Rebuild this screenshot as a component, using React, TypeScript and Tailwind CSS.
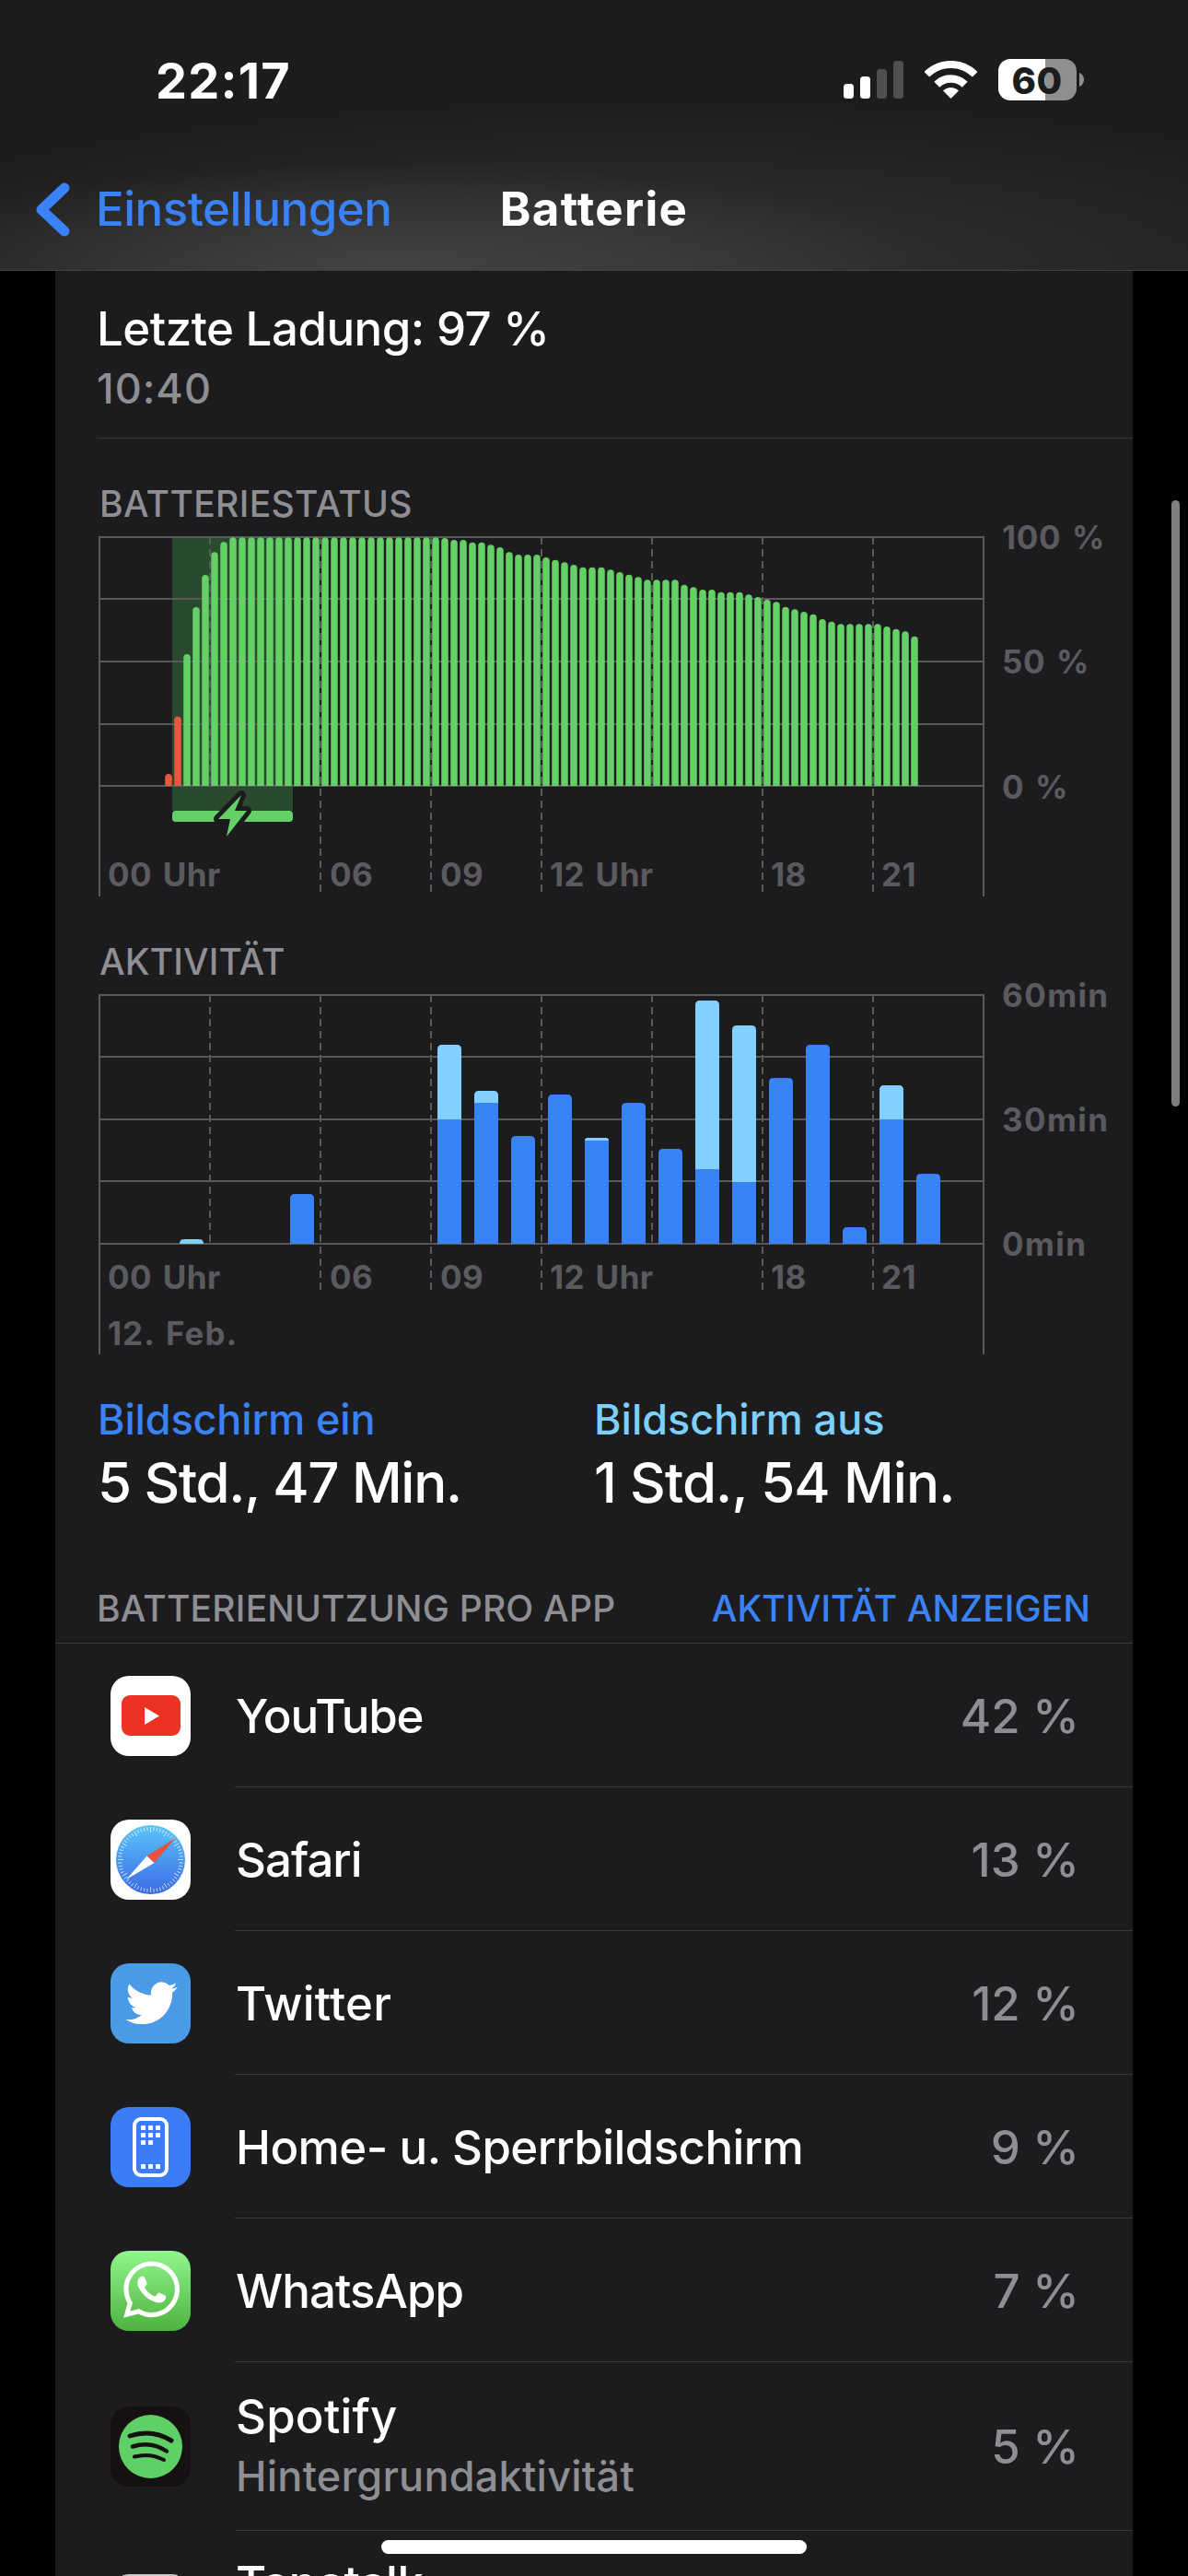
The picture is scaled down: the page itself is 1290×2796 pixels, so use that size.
import React from "react";

const tops = [
  ...Array(7).fill(null),
  960, 773, 570, 417, 312, 238, 205,
  ...Array(23).fill(190),
  192, 198, 198, 206, 206, 214, 222, 238, 246, 246, 246, 255, 263, 271, 279, 287, 287, 287, 295, 303, 311, 319, 328, 328, 328, 328,
  344, 352, 360, 360, 368, 368, 368, 376, 384, 392, 400, 416, 424, 432, 440, 456, 464, 472, 472, 472, 472, 472, 480, 488, 496, 512,
] as (number | null)[];

const activity: [number, number, number | null][] = [
  [2, 1035, 1050],
  [5, 888, null],
  [9, 402, 645],
  [10, 552, 591],
  [11, 699, null],
  [12, 564, null],
  [13, 705, 714],
  [14, 591, null],
  [15, 741, null],
  [16, 258, 807],
  [17, 339, 849],
  [18, 510, null],
  [19, 402, null],
  [20, 996, null],
  [21, 534, 645],
  [22, 822, null],
];

const GRID = "#59595b";
const LABEL = "#5b5b5f";

function topRound(x: number, y: number, w: number, bottom: number, r: number) {
  const rr = Math.min(r, bottom - y);
  return `M${x} ${bottom}V${y + rr}Q${x} ${y} ${x + rr} ${y}H${x + w - rr}Q${x + w} ${y} ${x + w} ${y + rr}V${bottom}Z`;
}

function Grid({ ys, top, axis, dashEnd, bottom }: { ys: number[]; top: number; axis: number; dashEnd: number; bottom: number }) {
  const dashes = [228, 348, 468, 588, 708, 828, 948];
  return (
    <g>
      {ys.map((y) => (
        <line key={y} x1={108} x2={1068} y1={y} y2={y} stroke={GRID} strokeWidth={2} />
      ))}
      <line x1={108} x2={108} y1={top - 1} y2={bottom} stroke={GRID} strokeWidth={2} />
      <line x1={1068} x2={1068} y1={top - 1} y2={bottom} stroke={GRID} strokeWidth={2} />
      {dashes.map((x) => (
        <line
          key={x}
          x1={x}
          x2={x}
          y1={top}
          y2={x === 228 || x === 708 ? axis : dashEnd}
          stroke={GRID}
          strokeWidth={2}
          strokeDasharray="8 5"
        />
      ))}
    </g>
  );
}

function XLabels({ y }: { y: number }) {
  const items: [number, string][] = [
    [117, "00 Uhr"],
    [358, "06"],
    [478, "09"],
    [597, "12 Uhr"],
    [837, "18"],
    [957, "21"],
  ];
  return (
    <g fill={LABEL} fontSize={35} fontWeight={700} letterSpacing={0.4} wordSpacing={3}>
      {items.map(([x, t]) => (
        <text key={t} x={x} y={y}>
          {t}
        </text>
      ))}
    </g>
  );
}

function BatteryChart() {
  return (
    <svg width={1170} height={405} viewBox="60 570 1170 405" className="block overflow-visible">
      <rect x={187} y={583} width={131} height={297} fill="#2a4a2e" />
      <Grid ys={[583, 650, 718, 786, 853]} top={583} axis={853} dashEnd={968} bottom={973} />
      {tops.map((t, i) => {
        if (t === null) return null;
        const x = 108 + 10 * i + 1.25;
        const y = 520 + t / 3;
        return <path key={i} d={topRound(x, y, 7.5, 853, 3.75)} fill={i < 9 ? "#e9573f" : "#64d066"} />;
      })}
      <rect x={187} y={880} width={131} height={12} rx={4} fill="#64d066" />
      <path
        d="M262 863L237 889H250L246 908L268 880H255Z"
        fill="#64d066"
        stroke="#1c1c1e"
        strokeWidth={10}
        strokeLinejoin="round"
        paintOrder="stroke"
      />
      <XLabels y={962} />
      <g fill={LABEL} fontSize={35} fontWeight={700} letterSpacing={0.6} wordSpacing={3}>
        <text x={1088} y={596}>100 %</text>
        <text x={1088} y={731}>50 %</text>
        <text x={1088} y={867}>0 %</text>
      </g>
    </svg>
  );
}

function ActivityChart() {
  return (
    <svg width={1170} height={405} viewBox="60 1067 1170 405" className="block overflow-visible">
      <Grid ys={[1080, 1147, 1215, 1282, 1350]} top={1080} axis={1350} dashEnd={1404} bottom={1470} />
      {activity.map(([i, t, s]) => {
        const x = 115 + 40 * i;
        const y = 1000 + t / 3;
        if (s === null) return <path key={i} d={topRound(x, y, 26, 1350, 5)} fill="#3a82f7" />;
        const split = 1000 + s / 3;
        return (
          <g key={i}>
            <path d={topRound(x, y, 26, split, 5)} fill="#82d0ff" />
            {split < 1350 && <rect x={x} y={split} width={26} height={1350 - split} fill="#3a82f7" />}
          </g>
        );
      })}
      <XLabels y={1399} />
      <g fill={LABEL} fontSize={35} fontWeight={700} wordSpacing={3}>
        <text x={117} y={1460} letterSpacing={1}>12. Feb.</text>
        <text x={1088} y={1093} letterSpacing={1.4}>60min</text>
        <text x={1088} y={1228} letterSpacing={1.4}>30min</text>
        <text x={1088} y={1363} letterSpacing={1.4}>0min</text>
      </g>
    </svg>
  );
}

function Icon({ bg, children }: { bg: string; children: React.ReactNode }) {
  return (
    <svg width={87} height={87} viewBox="0 0 87 87" className={`shrink-0 rounded-[20px] ${bg}`}>
      {children}
    </svg>
  );
}

function YouTubeIcon() {
  return (
    <Icon bg="bg-white">
      <rect x={12} y={21} width={64} height={44} rx={9} fill="#ec3323" />
      <path d="M37 34V53L53 43.5Z" fill="#fff" />
    </Icon>
  );
}

function SafariIcon() {
  const ticks = Array.from({ length: 60 }, (_, i) => i * 6);
  return (
    <Icon bg="bg-white">
      <defs>
        <linearGradient id="saf" x1="0" y1="0" x2="0" y2="1">
          <stop offset="0" stopColor="#5ac4f9" />
          <stop offset="1" stopColor="#3a6ae6" />
        </linearGradient>
      </defs>
      <circle cx={43.5} cy={43.5} r={37.5} fill="url(#saf)" />
      {ticks.map((a) => (
        <line
          key={a}
          x1={43.5}
          x2={43.5}
          y1={8}
          y2={a % 30 === 0 ? 14 : 12}
          stroke="#fff"
          strokeOpacity={0.85}
          strokeWidth={0.8}
          transform={`rotate(${a} 43.5 43.5)`}
        />
      ))}
      <path d="M70.5 20L39.5 39.5L47.5 47Z" fill="#e9503f" />
      <path d="M17 65L47.5 47L39.5 39.5Z" fill="#fff" />
    </Icon>
  );
}

function TwitterIcon() {
  return (
    <Icon bg="bg-[#4a9ae8]">
      <g transform="translate(16.5 15) scale(2.35)">
        <path
          fill="#fff"
          d="M23.953 4.57a10 10 0 01-2.825.775 4.958 4.958 0 002.163-2.723c-.951.555-2.005.959-3.127 1.184a4.92 4.92 0 00-8.384 4.482C7.69 8.095 4.067 6.13 1.64 3.162a4.822 4.822 0 00-.666 2.475c0 1.71.87 3.213 2.188 4.096a4.904 4.904 0 01-2.228-.616v.06a4.923 4.923 0 003.946 4.827 4.996 4.996 0 01-2.212.085 4.936 4.936 0 004.604 3.417 9.867 9.867 0 01-6.102 2.105c-.39 0-.779-.023-1.17-.067a13.995 13.995 0 007.557 2.209c9.053 0 13.998-7.496 13.998-13.985 0-.21 0-.42-.015-.63A9.935 9.935 0 0024 4.59z"
        />
      </g>
    </Icon>
  );
}

function HomeIcon() {
  const dots: [number, number][] = [
    [33, 20], [41, 20], [49, 20],
    [33, 28], [41, 28], [49, 28],
    [33, 36], [41, 36],
    [33, 62], [41, 62], [49, 62],
  ];
  return (
    <Icon bg="bg-[#3a7df6]">
      <rect x={26} y={13} width={35} height={61} rx={7} fill="none" stroke="#fff" strokeWidth={4} />
      {dots.map(([x, y]) => (
        <rect key={`${x}-${y}`} x={x} y={y} width={5} height={5} fill="#fff" rx={0.6} />
      ))}
    </Icon>
  );
}

function WhatsAppIcon() {
  return (
    <Icon bg="bg-gradient-to-b from-[#90f68c] to-[#4fb33f]">
      <g transform="translate(14 11.5) scale(2.55)">
        <path
          fill="#fff"
          d="M17.472 14.382c-.297-.149-1.758-.867-2.03-.967-.273-.099-.471-.148-.67.15-.197.297-.767.966-.94 1.164-.173.199-.347.223-.644.075-.297-.15-1.255-.463-2.39-1.475-.883-.788-1.48-1.761-1.653-2.059-.173-.297-.018-.458.13-.606.134-.133.298-.347.446-.52.149-.174.198-.298.298-.497.099-.198.05-.371-.025-.52-.075-.149-.669-1.612-.916-2.207-.242-.579-.487-.5-.669-.51-.173-.008-.371-.01-.57-.01-.198 0-.52.074-.792.372-.272.297-1.04 1.016-1.04 2.479 0 1.462 1.065 2.875 1.213 3.074.149.198 2.096 3.2 5.077 4.487.709.306 1.262.489 1.694.625.712.227 1.36.195 1.871.118.571-.085 1.758-.719 2.006-1.413.248-.694.248-1.289.173-1.413-.074-.124-.272-.198-.57-.347m-5.421 7.403h-.004a9.87 9.87 0 01-5.031-1.378l-.361-.214-3.741.982.998-3.648-.235-.374a9.86 9.86 0 01-1.51-5.26c.001-5.45 4.436-9.884 9.888-9.884 2.64 0 5.122 1.03 6.988 2.898a9.825 9.825 0 012.893 6.994c-.003 5.45-4.437 9.884-9.885 9.884m8.413-18.297A11.815 11.815 0 0012.05 0C5.495 0 .16 5.335.157 11.892c0 2.096.547 4.142 1.588 5.945L.057 24l6.305-1.654a11.882 11.882 0 005.683 1.448h.005c6.554 0 11.89-5.335 11.893-11.893a11.821 11.821 0 00-3.48-8.413z"
        />
      </g>
    </Icon>
  );
}

function SpotifyIcon() {
  return (
    <Icon bg="bg-[#141110]">
      <circle cx={43.5} cy={43.5} r={34.5} fill="#5fd068" />
      <g fill="none" stroke="#141110" strokeLinecap="round">
        <path d="M21 32Q45 24 66 37" strokeWidth={5} />
        <path d="M24 43.5Q44 37 61 48.5" strokeWidth={4.5} />
        <path d="M26 54.5Q43 50 58 58" strokeWidth={4} />
      </g>
    </Icon>
  );
}

function TapatalkIcon() {
  return (
    <Icon bg="bg-[#1c1c1e]">
      <rect x={13} y={0} width={60} height={2} fill="#c9c9c9" />
    </Icon>
  );
}

function AppRow({
  icon,
  name,
  track,
  sub,
  value,
  tall,
}: {
  icon: React.ReactNode;
  name: string;
  track: string;
  sub?: string;
  value?: string;
  tall?: boolean;
}) {
  return (
    <div className={`flex items-stretch pl-[60px] ${tall ? "h-[183px]" : "h-[156px]"}`}>
      <div className="flex shrink-0 items-center">{icon}</div>
      <div className="ml-[48px] flex flex-1 items-center justify-between border-b border-[#3a3a3c] pl-px pr-[58px] pt-[2px]">
        <div className={`flex flex-col ${sub ? "pb-[5px]" : ""}`}>
          <span className={`text-[51px] font-[450] leading-[60px] text-white ${track}`}>{name}</span>
          {sub && <span className="mt-[8px] text-[45px] font-[450] leading-[54px] tracking-[0.25px] text-[#8e8e93]">{sub}</span>}
        </div>
        {value && <span className="text-[51px] font-[450] leading-[60px] tracking-[0px] text-[#8e8e93]">{value}</span>}
      </div>
    </div>
  );
}

function LastRow() {
  return (
    <div className="flex h-[183px] items-start pl-[60px] pt-[27px]">
      <div className="mt-[20px] shrink-0">
        <TapatalkIcon />
      </div>
      <span className="ml-[49px] text-[51px] font-[450] leading-[60px] tracking-[-0.5px] text-white">Tapatalk</span>
    </div>
  );
}

function StatusIcons() {
  return (
    <div className="flex items-center gap-[23px] pt-[6px]">
      <svg width={65} height={41} viewBox="0 0 65 41">
        <rect x={0} y={25} width={11} height={16} rx={3.5} fill="#fff" />
        <rect x={18} y={17} width={11} height={24} rx={3.5} fill="#fff" />
        <rect x={36} y={9} width={11} height={32} rx={3.5} fill="#4f4f4f" />
        <rect x={54} y={0} width={11} height={41} rx={3.5} fill="#4f4f4f" />
      </svg>
      <svg width={57} height={41} viewBox="0 0 57 41">
        <path d="M2.3 14.8A37 37 0 0 1 54.7 14.8" fill="none" stroke="#fff" strokeWidth={8} />
        <path d="M13.3 25.8A21.5 21.5 0 0 1 43.7 25.8" fill="none" stroke="#fff" strokeWidth={8.5} />
        <path d="M28.5 41L20 32.5A12 12 0 0 1 37 32.5Z" fill="#fff" />
      </svg>
      <svg width={93} height={45} viewBox="0 0 93 45" className="overflow-visible">
        <defs>
          <clipPath id="bat">
            <rect x={0} y={0} width={85} height={45} rx={13} />
          </clipPath>
        </defs>
        <g clipPath="url(#bat)">
          <rect x={0} y={0} width={51} height={45} fill="#fff" />
          <rect x={51} y={0} width={34} height={45} fill="#8f8f8f" />
        </g>
        <path d="M88 15C91 16 93 19 93 22.5C93 26 91 29 88 30Z" fill="#8f8f8f" />
        <text x={42} y={38} textAnchor="middle" fontSize={40} fontWeight={800} fill="#1c1c1c" letterSpacing={0.5}>
          60
        </text>
      </svg>
    </div>
  );
}

function Header() {
  return (
    <header className="h-[294px] border-b border-[#414143] bg-[radial-gradient(ellipse_45%_40%_at_33%_100%,#434344,transparent),radial-gradient(ellipse_75%_65%_at_55%_100%,#333334,#1c1c1c)]">
      <div className="flex items-start justify-between pl-[169px] pr-[113px] pt-[58px]">
        <span className="text-[54px] font-bold leading-[60px] tracking-[1.2px] text-white">22:17</span>
        <StatusIcons />
      </div>
      <div className="mt-[79px] grid h-[60px] grid-cols-[1fr_auto_1fr] items-center">
        <div className="flex items-center gap-[28px] pl-[39px]">
          <svg width={37} height={59} viewBox="0 0 37 59" className="shrink-0">
            <path d="M31 6L6 29.5L31 53" fill="none" stroke="#3a82f7" strokeWidth={11} strokeLinecap="round" strokeLinejoin="round" />
          </svg>
          <span className="text-[51px] font-[450] leading-[60px] tracking-[-0.5px] text-[#3a82f7]">Einstellungen</span>
        </div>
        <span className="text-[51px] font-bold leading-[60px] tracking-[1.3px] text-white">Batterie</span>
        <div />
      </div>
    </header>
  );
}

export default function App() {
  return (
    <div className="relative h-[2796px] w-[1290px] overflow-hidden bg-black font-['Inter',sans-serif]">
      <Header />
      <main className="mx-[60px] h-[2502px] overflow-hidden bg-[#1c1c1e]">
        <section className="ml-[45px] border-b border-[#3a3a3c] pb-[26px] pt-[33px]">
          <p className="text-[51px] font-[450] leading-[60px] tracking-[-0.5px] text-white">Letzte Ladung: 97 %</p>
          <p className="mt-[8px] text-[45px] font-[450] leading-[54px] tracking-[1px] text-[#8e8e93]">10:40</p>
        </section>

        <h2 className="ml-[48px] mt-[48px] text-[39px] font-[450] leading-[46px] tracking-[0.35px] text-[#8e8e93]">BATTERIESTATUS</h2>
        <BatteryChart />

        <h2 className="ml-[48px] mt-[46px] text-[39px] font-[450] leading-[46px] tracking-[0.1px] text-[#8e8e93]">AKTIVITÄT</h2>
        <ActivityChart />

        <div className="ml-[46px] mt-[42px] flex">
          <div className="w-[539px]">
            <p className="text-[45px] font-[450] leading-[54px] tracking-[-0.15px] text-[#3a82f7]">Bildschirm ein</p>
            <p className="mt-[6px] text-[60px] font-medium leading-[70px] tracking-[-1.3px] text-white">5 Std., 47 Min.</p>
          </div>
          <div>
            <p className="text-[45px] font-[450] leading-[54px] tracking-[0px] text-[#7cd0fb]">Bildschirm aus</p>
            <p className="mt-[6px] text-[60px] font-medium leading-[70px] tracking-[-0.9px] text-white">1 Std., 54 Min.</p>
          </div>
        </div>

        <div className="mt-[79px] flex justify-between border-b border-[#3a3a3c] pb-[14px] pl-[45px] pr-[46px] text-[39px] font-[450] leading-[46px]">
          <span className="tracking-[0.2px] text-[#8e8e93]">BATTERIENUTZUNG PRO APP</span>
          <span className="tracking-[0.1px] text-[#3a82f7]">AKTIVITÄT ANZEIGEN</span>
        </div>

        <AppRow icon={<YouTubeIcon />} name="YouTube" track="tracking-[-1.2px]" value="42 %" />
        <AppRow icon={<SafariIcon />} name="Safari" track="tracking-[-1px]" value="13 %" />
        <AppRow icon={<TwitterIcon />} name="Twitter" track="tracking-[0.2px]" value="12 %" />
        <AppRow icon={<HomeIcon />} name="Home- u. Sperrbildschirm" track="tracking-[-0.6px]" value="9 %" />
        <AppRow icon={<WhatsAppIcon />} name="WhatsApp" track="tracking-[-0.9px]" value="7 %" />
        <AppRow icon={<SpotifyIcon />} name="Spotify" track="tracking-[0.2px]" sub="Hintergrundaktivität" value="5 %" tall />
        <LastRow />
      </main>

      <div className="absolute left-[1272px] top-[543px] h-[658px] w-[9px] rounded-full bg-[#7f7f7f]" />
      <div className="absolute left-[414px] top-[2757px] h-[15px] w-[462px] rounded-full bg-white" />
    </div>
  );
}
